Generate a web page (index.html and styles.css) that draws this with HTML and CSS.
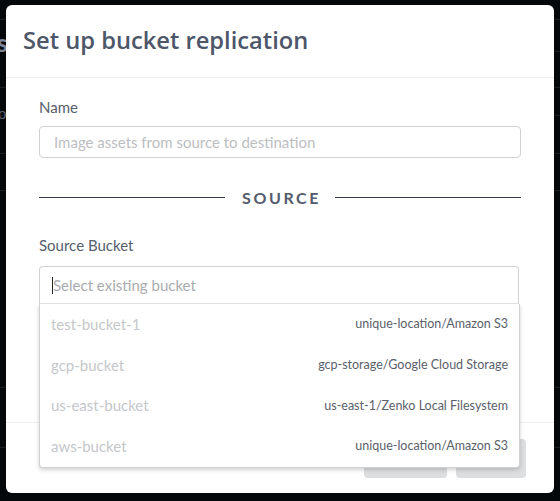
FILE: index.html
```html
<!DOCTYPE html>
<html>
<head>
<meta charset="utf-8">
<link rel="stylesheet" href="styles.css">
</head>
<body>
<div class="backdrop">
  <span class="bg-s">s</span>
  <span class="bg-ol">ol</span>
</div>
<div class="modal">
  <div class="modal-header">
    <h1 class="title">Set up bucket replication</h1>
  </div>
  <div class="modal-body">
    <label class="field-label">Name</label>
    <div class="text-input">Image assets from source to destination</div>
    <div class="divider">
      <span class="divider-line"></span>
      <span class="divider-text">SOURCE</span>
      <span class="divider-line"></span>
    </div>
    <label class="field-label field-label-2">Source Bucket</label>
    <div class="select">
      <div class="select-input"><span class="caret"></span>Select existing bucket</div>
      <ul class="menu">
        <li class="option"><span class="opt-name">test-bucket-1</span><span class="opt-loc">unique-location/Amazon S3</span></li>
        <li class="option"><span class="opt-name">gcp-bucket</span><span class="opt-loc">gcp-storage/Google Cloud Storage</span></li>
        <li class="option"><span class="opt-name">us-east-bucket</span><span class="opt-loc">us-east-1/Zenko Local Filesystem</span></li>
        <li class="option"><span class="opt-name">aws-bucket</span><span class="opt-loc">unique-location/Amazon S3</span></li>
      </ul>
    </div>
  </div>
  <div class="modal-footer">
    <div class="btn btn-cancel"></div>
    <div class="btn btn-ok"></div>
  </div>
</div>
</body>
</html>
```

FILE: styles.css
```css
html, body {
  margin: 0;
  padding: 0;
}
body {
  width: 560px;
  height: 501px;
  overflow: hidden;
  position: relative;
  background-color: #05080b;
  background-image:
    linear-gradient(#1a1f26, #1a1f26),
    linear-gradient(#1a1f26, #1a1f26),
    linear-gradient(#1a1f26, #1a1f26),
    linear-gradient(#1a1f26, #1a1f26),
    linear-gradient(#1a1f26, #1a1f26),
    linear-gradient(#1a1f26, #1a1f26),
    linear-gradient(#1a1f26, #1a1f26),
    linear-gradient(#1a1f26, #1a1f26);
  background-size: 100% 1px;
  background-repeat: no-repeat;
  background-position: 0 19px, 0 51px, 0 87px, 0 115px, 0 153px, 0 190px, 0 387px, 0 447px;
  font-family: "Lato", "Noto Sans", sans-serif;
}
.backdrop {
  position: absolute;
  inset: 0;
  color: #6b7280;
}
.bg-s {
  position: absolute;
  left: -3px;
  top: 28px;
  font-size: 24px;
  font-weight: 700;
  color: #7b8394;
}
.bg-ol {
  position: absolute;
  left: -2px;
  top: 104px;
  font-size: 15px;
  color: #5a6170;
}
.modal {
  position: relative;
  margin: 5px 0 0 6px;
  width: 548px;
  height: 488px;
  background: #fff;
  border-radius: 6px;
  display: flex;
  flex-direction: column;
}
.modal-header {
  height: 72px;
  border-bottom: 1px solid #eceef0;
  padding-left: 17px;
  display: flex;
  align-items: center;
}
.title {
  margin: 0;
  font-size: 23.7px;
  color: #4e566a;
  letter-spacing: 0;
  font-family: "Open Sans", "Lato", sans-serif;
  font-weight: 600;
  padding-bottom: 2px;
}
.modal-body {
  height: 344px;
  box-sizing: border-box;
  padding: 19px 33px 0 33px;
  display: flex;
  flex-direction: column;
}
.field-label {
  display: block;
  font-size: 15px;
  line-height: 20px;
  color: #575e6c;
  margin-bottom: 9px;
}
.field-label-2 {
  margin-bottom: 11px;
}
.text-input {
  height: 32px;
  box-sizing: border-box;
  border: 1px solid #cfd1d4;
  border-radius: 4px;
  padding-left: 14px;
  font-size: 15px;
  line-height: 30px;
  color: #bcbec2;
}
.divider {
  margin-top: 27px;
  height: 24px;
  display: flex;
  align-items: center;
  gap: 17px;
  margin-bottom: 26px;
}
.divider-line {
  flex: 1;
  height: 1px;
  background: #343b46;
}
.divider-text {
  width: 76px;
  text-align: center;
  font-size: 16px;
  font-weight: 700;
  letter-spacing: 2.6px;
  color: #535b6c;
  padding-right: 6px;
  box-sizing: border-box;
  white-space: nowrap;
}
.select {
  position: relative;
  width: 480px;
}
.select-input {
  height: 38px;
  box-sizing: border-box;
  border: 1px solid #cfd1d4;
  border-bottom: 1px solid #e4e5e7;
  border-radius: 4px 4px 0 0;
  padding-left: 12px;
  font-size: 15px;
  line-height: 36px;
  color: #a9abb0;
  display: flex;
  align-items: center;
}
.caret {
  display: inline-block;
  width: 1px;
  height: 17px;
  background: #222;
}
.menu {
  position: absolute;
  left: 0;
  top: 38px;
  width: 481px;
  margin: 0;
  padding: 0;
  list-style: none;
  background: #fff;
  box-sizing: border-box;
  border: 1px solid #cfd1d4;
  border-top: none;
  border-radius: 0 0 4px 4px;
  box-shadow: 0 2px 4px rgba(0, 0, 0, 0.18);
  z-index: 2;
}
.option {
  height: 40.7px;
  display: flex;
  align-items: center;
  justify-content: space-between;
  padding: 0 11px 1px 11px;
  box-sizing: border-box;
}
.opt-name {
  font-size: 15px;
  color: #c5c7ca;
}
.opt-loc {
  font-size: 12.5px;
  color: #5b606b;
}
.modal-footer {
  flex: 1;
  border-top: 1px solid #eceef0;
  display: flex;
  justify-content: flex-end;
  align-items: flex-start;
  gap: 9px;
  padding: 16px 28px 0 0;
}
.btn {
  height: 39px;
  border-radius: 4px;
  background: #dddee0;
}
.btn-cancel {
  width: 83px;
}
.btn-ok {
  width: 70px;
}
```
